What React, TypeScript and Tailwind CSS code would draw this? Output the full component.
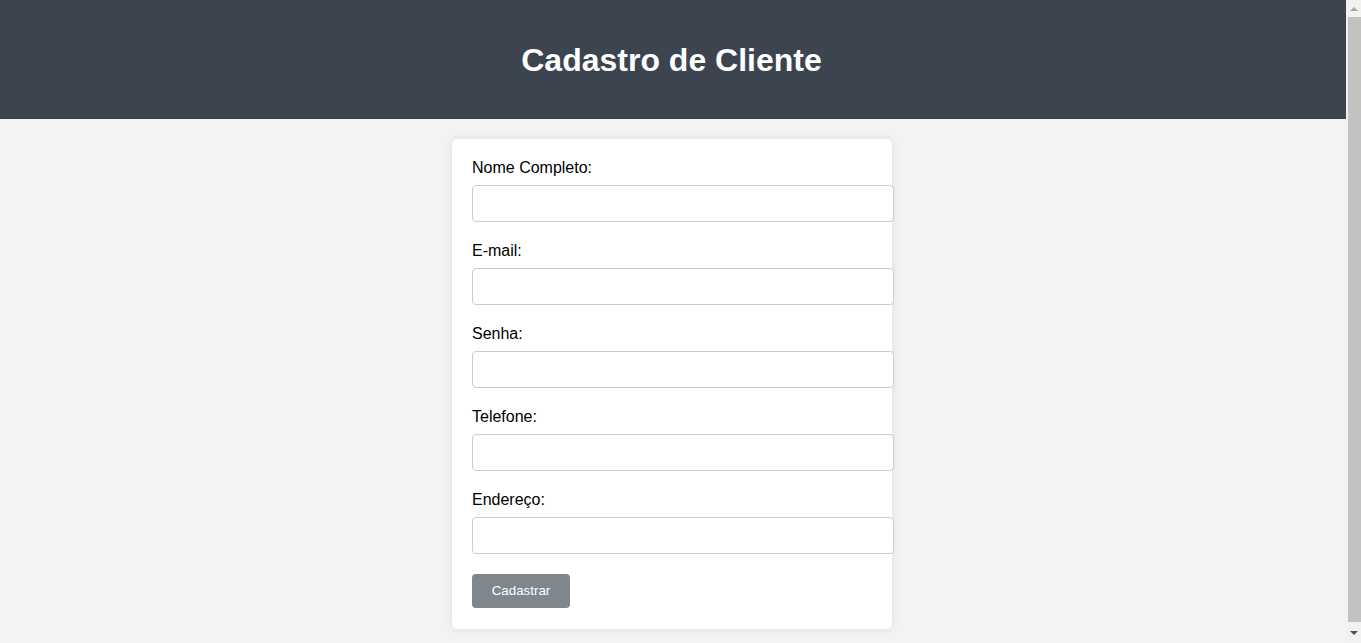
import React from "react";

const fields = ["Nome Completo:", "E-mail:", "Senha:", "Telefone:", "Endereço:"];

export default function App() {
  return (
    <div className="flex h-screen overflow-hidden bg-[#f3f3f3] font-['Liberation_Sans',Arial,sans-serif] text-black">
      <div className="flex-1 overflow-hidden">
        <header className="h-[119px] bg-[#3c4450] flex items-center justify-center pr-[3px] pt-[1px]">
          <h1 className="text-[32px] font-bold text-white leading-[37px]">Cadastro de Cliente</h1>
        </header>
        <div className="pt-5 pb-5 pr-[2px]">
          <div className="mx-auto w-[440px] bg-white rounded-[5px] shadow-[0_0_10px_rgba(0,0,0,0.1)] p-5 pb-[21px]">
            {fields.map((f) => (
              <div key={f}>
                <label className="block text-[16px] leading-[18px] mb-2">{f}</label>
                <input
                  type={f === "Senha:" ? "password" : "text"}
                  className="block w-[422px] h-[37px] mb-5 px-[10px] border border-[#cccccc] rounded-[4px] bg-white outline-none"
                />
              </div>
            ))}
            <button className="w-[98px] h-[34px] bg-[#80868e] text-white text-[13.333px] rounded-[4px]">
              Cadastrar
            </button>
          </div>
        </div>
      </div>
      <div className="w-[15px] h-full bg-[#f1f1f1] flex flex-col items-end">
        <div className="h-[17px] w-full flex items-center justify-center">
          <div className="w-0 h-0 border-l-[4px] border-r-[4px] border-b-[4px] border-l-transparent border-r-transparent border-b-[#a3a3a3]" />
        </div>
        <div className="flex-1 w-[13px] bg-[#c1c1c1]" />
        <div className="h-[21px] w-full flex items-center justify-center">
          <div className="w-0 h-0 border-l-[4px] border-r-[4px] border-t-[4px] border-l-transparent border-r-transparent border-t-[#505050]" />
        </div>
      </div>
    </div>
  );
}
